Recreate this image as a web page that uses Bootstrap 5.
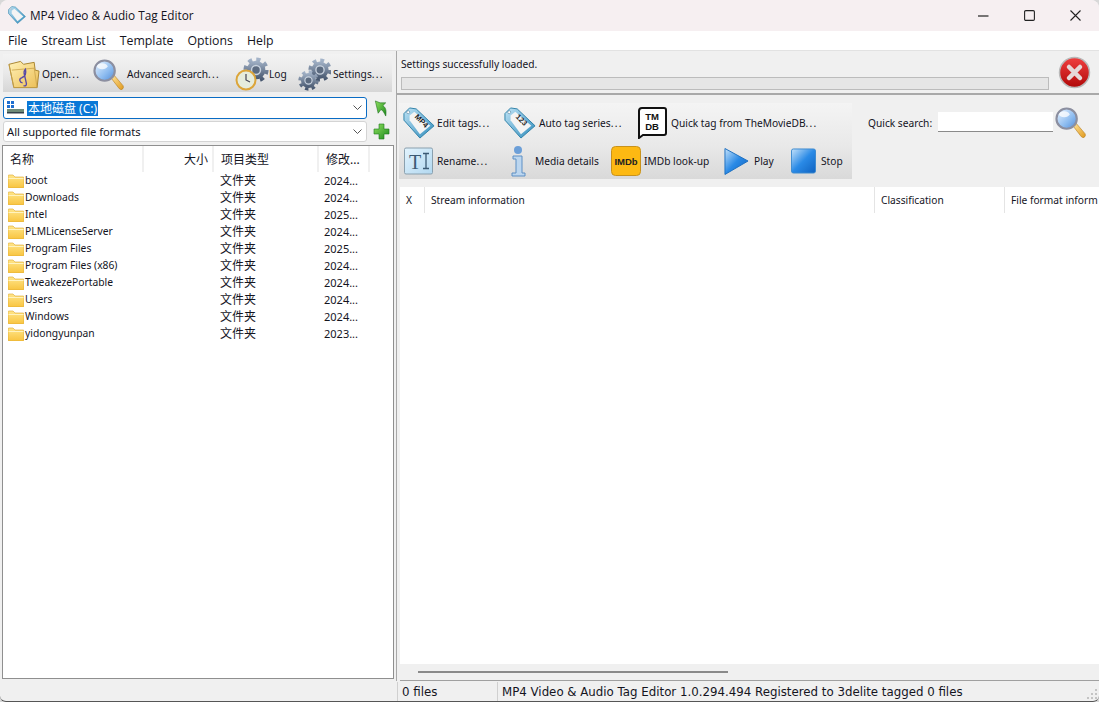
<!DOCTYPE html>
<html lang="en">
<head>
<meta charset="utf-8">
<title>MP4 Video &amp; Audio Tag Editor</title>
<link href="https://cdn.jsdelivr.net/npm/bootstrap@5.3.0/dist/css/bootstrap.min.css" rel="stylesheet">
<style>
html,body{height:100%;margin:0;overflow:hidden;background:#d8d8d8}
body{font-family:"Noto Sans","Noto Sans CJK SC",sans-serif;font-size:10.2px;color:#14141e}
.appwin{width:1099px;height:702px;background:#f0f0f0;border-radius:8px 8px 6px 6px;overflow:hidden;border-bottom:1px solid #555}
.titlebar{height:31px;background:#f6eff1;padding:0 0 1px 8px;font:11.8px "Open Sans",sans-serif;flex:none}
.titlebar svg.ticon{margin-right:4px}
.winbtns{margin-left:auto;margin-right:1px}
.winbtn{width:46px;height:30px;display:flex;align-items:center;justify-content:center}
.menubar{height:19px;background:#fff;padding-left:8px;gap:14px;font:12.3px "Open Sans",sans-serif;flex:none;line-height:19px}
.mainarea{flex:1 1 auto;min-height:0;border-top:1px solid #e2e2e2}
.leftpane{width:394px;flex:none;padding:3px 0 0 3px}
.rightpane{flex:1 1 auto;min-width:0;margin-left:2px;border-left:1px solid #a8a8a8}
.tools{height:38px;width:389px;background:linear-gradient(#f3f3f3,#e9e9e9 50%,#d6d6d6);padding-left:5px;padding-top:2px}
.toolitem{display:flex;align-items:center;white-space:nowrap;flex:none}
.toolitem>span{padding-top:2px}
.dotz{letter-spacing:1.3px}
.combo{height:22px;background:#fff;border:1px solid #d4d4d4;border-radius:3px;width:364px;position:relative;display:flex;align-items:center;padding-left:3px;font-size:11.2px}
.combo.on{border-color:#0a6cc4}
.combo .chev{position:absolute;right:4px;top:7px}
.combo.plain{height:21px;padding:1px 0 0 3px}
.sel{background:#0a78d7;color:#fff;font-size:12px;line-height:15px;padding:0 1px;margin-left:3px}
.comborow{gap:6px;height:22px}
.comboa{margin-top:5px}
.combob{margin-top:2px;height:21px}
.filebox{flex:1 1 auto;margin:3px 0 2px -1px;background:#fff;border:1px solid #8f8f8f;width:392px;min-height:0}
.ftable{table-layout:fixed;width:366px;margin:0;--bs-table-bg:transparent;font-size:10.3px}
.ftable td,.ftable th{padding:0;height:17px;line-height:17px;white-space:nowrap;overflow:hidden;vertical-align:middle;color:#14141e}
.ftable th{height:26px;font-weight:400;font-size:12px;border-right:2px solid #f0f0f0;padding-left:7px;padding-top:1px}
.ftable td.typec{font-size:12px;padding-left:7px}
.ftable td.datec{padding-left:6px;font-size:11px}
.fname{display:flex;align-items:center;padding-left:5px;gap:1px}
.msgarea{height:44px;flex:none;border-bottom:2px solid #a9a9a9;padding:0 8px 0 4px}
.msgtxt{line-height:14px;padding-top:6px}
.progressbox{height:13px;width:648px;background:#e6e6e6;border:1px solid #bcbcbc;margin-top:6px}
.stopx{margin-left:9px;margin-top:5px;flex:none}
.tagarea{height:92px;flex:none;padding:8px 0 0 2px;background:#f0f0f0}
.tagtools{width:453px;height:76px;background:linear-gradient(#f4f4f4,#e9e9e9 55%,#d9d9d9);padding:0 0 0 4px;flex:none}
.tagrow{height:38px;padding-top:2px}
.qsearch{margin-left:16px;height:38px}
.qinput{width:115px;height:20px;background:#fff;border:0;border-bottom:1px solid #8a8a8a;margin-left:6px;margin-right:2px;border-radius:0;padding:0}
.streamtable{flex:1 1 auto;background:#fff;min-height:0;margin-left:3px;overflow:hidden}
.shead{height:26px;flex:none;white-space:nowrap;overflow:hidden}
.shead>div{flex:none;height:26px;line-height:26px;padding-left:6px;border-right:1px solid #e4e4e4}
.sbar{height:17px;flex:none;background:#f0f0f0;margin-left:3px;padding-left:18px;border-bottom:1px solid #a0a0a0}
.sbar div{width:310px;height:2px;background:#8a8a8a;margin-top:7px}
.statusbar{height:20px;flex:none;font:11.8px "DejaVu Sans",sans-serif;line-height:20px;position:relative;padding-top:1px}
.stleft{width:398px;flex:none;border-right:1px solid #d0d0d0;height:19px}
.stfiles{width:100px;flex:none;padding-left:4px;border-right:1px solid #d0d0d0;height:19px}
.stmain{padding-left:4px;white-space:nowrap}
.grip{position:absolute;right:1px;bottom:1px}
.tagtext{font-family:"Liberation Sans",sans-serif;font-weight:700;font-size:8px;fill:#222}
</style>
</head>
<body>
<svg width="0" height="0" class="position-absolute">
<defs>
<linearGradient id="gGlass" x1="0" y1="0" x2="1" y2="1"><stop offset="0" stop-color="#eef6ff"/><stop offset=".6" stop-color="#8dbcf0"/><stop offset="1" stop-color="#4f8ad6"/></linearGradient>
<linearGradient id="gHandle" x1="0" y1="0" x2="1" y2="1"><stop offset="0" stop-color="#ffe39a"/><stop offset="1" stop-color="#e09a1e"/></linearGradient>
<linearGradient id="gGear" x1="0" y1="0" x2="0" y2="1"><stop offset="0" stop-color="#a3b3c8"/><stop offset="1" stop-color="#46566e"/></linearGradient>
<linearGradient id="gFold" x1="0" y1="0" x2="1" y2="1"><stop offset="0" stop-color="#fff2b8"/><stop offset="1" stop-color="#ecbe55"/></linearGradient>
<linearGradient id="gBlue" x1="0" y1="0" x2="1" y2="1"><stop offset="0" stop-color="#c5e2fa"/><stop offset=".5" stop-color="#2a8ae6"/><stop offset="1" stop-color="#0f62c0"/></linearGradient>
<linearGradient id="gTag" x1="0" y1="0" x2="1" y2="1"><stop offset="0" stop-color="#bfe3f5"/><stop offset="1" stop-color="#2f8cbc"/></linearGradient>
<linearGradient id="gRed" x1="0" y1="0" x2="0" y2="1"><stop offset="0" stop-color="#f04040"/><stop offset="1" stop-color="#b00808"/></linearGradient>
<linearGradient id="gGreen" x1="0" y1="0" x2="1" y2="1"><stop offset="0" stop-color="#8fe060"/><stop offset="1" stop-color="#1c8a1c"/></linearGradient>
<linearGradient id="gSmall" x1="0" y1="0" x2="0" y2="1"><stop offset="0" stop-color="#ffe68a"/><stop offset="1" stop-color="#f8c440"/></linearGradient>
<linearGradient id="gTI" x1="0" y1="0" x2="1" y2="1"><stop offset="0" stop-color="#e2f3fd"/><stop offset="1" stop-color="#b2d8f0"/></linearGradient>
<symbol id="iGlass" viewBox="0 0 32 32">
<path d="M19 20l3-3 9 10.500q1 2-.5 3.500t-3.500-.5z" fill="url(#gHandle)" stroke="#b57a18" stroke-width=".6"/>
<circle cx="12" cy="12" r="10.500" fill="url(#gGlass)" stroke="#8c8fa0" stroke-width="2.200"/>
<ellipse cx="9.500" cy="7.500" rx="5.500" ry="3" fill="#fff" opacity=".75"/>
</symbol>
<symbol id="iGear" viewBox="0 0 32 32">
<circle cx="16" cy="16" r="11.500" fill="url(#gGear)"/>
<circle cx="16" cy="16" r="13" fill="none" stroke="url(#gGear)" stroke-width="5" stroke-dasharray="5.100 5.100"/>
<circle cx="16" cy="16" r="5.500" fill="#5c6b80" stroke="#c8d2de" stroke-width="1.800"/>
</symbol>
<symbol id="iTag" viewBox="0 0 34 34">
<path d="M1 7 7 1 14 2 33 20 18 33 1 14z" fill="url(#gTag)" stroke="#2a7ea6" stroke-width="1"/>
<path d="M7 9 12 5 29 20 18 29 7 14z" fill="#f4f4f4"/>
<circle cx="5.500" cy="5.500" r="1.600" fill="#fff" stroke="#5c8aa6" stroke-width=".7"/>
</symbol>
</defs>
</svg>

<div class="appwin d-flex flex-column">
  <div class="titlebar d-flex align-items-center">
    <svg class="ticon" width="18" height="18" viewBox="0 0 34 34"><use href="#iTag"/></svg>
    <span>MP4 Video &amp; Audio Tag Editor</span>
    <div class="winbtns d-flex">
      <div class="winbtn"><svg width="11" height="11" viewBox="0 0 11 11"><path d="M0 6h10.500" stroke="#222" stroke-width="1.200"/></svg></div>
      <div class="winbtn"><svg width="11" height="11" viewBox="0 0 11 11"><rect x=".6" y=".6" width="9.800" height="9.800" rx="1.200" fill="none" stroke="#222" stroke-width="1.100"/></svg></div>
      <div class="winbtn"><svg width="11" height="11" viewBox="0 0 11 11"><path d="M.5.500l10 10M10.500.500l-10 10" stroke="#222" stroke-width="1.100"/></svg></div>
    </div>
  </div>
  <div class="menubar d-flex"><span>File</span><span>Stream List</span><span>Template</span><span>Options</span><span>Help</span></div>

  <div class="mainarea d-flex">
    <div class="leftpane d-flex flex-column">
      <div class="tools d-flex align-items-center">
        <div class="toolitem" style="width:85px;gap:2px">
          <svg width="32" height="32" viewBox="0 0 33 32">
            <path d="M1 6 L13 3 L16 6 L27 4 L28 12 L32 13 L30 30 L6 30z" fill="url(#gFold)" stroke="#a88430" stroke-width="1"/>
            <path d="M1 6 L6 30 L30 30 L27 10 L4 12" fill="none" stroke="#c9a24a" stroke-width=".8"/>
            <path d="M15 25c-3 0-4-4-1-5 4-2 5-4 4-9-1 1-2 3-1 6l2 9q0 3-3 2" fill="none" stroke="#5a4aa6" stroke-width="1.400"/>
          </svg><span>Open<span class="dotz">...</span></span>
        </div>
        <div class="toolitem" style="width:142px;gap:3px">
          <svg width="31" height="31"><use href="#iGlass"/></svg><span>Advanced search<span class="dotz">...</span></span>
        </div>
        <div class="toolitem" style="width:63px">
          <svg width="34" height="34" viewBox="0 0 34 34">
            <use href="#iGear" x="8" y="0" width="26" height="26"/>
            <circle cx="11" cy="23" r="9.500" fill="#e6ecdc" stroke="#dca53a" stroke-width="2"/>
            <path d="M11 17v6l4 2" stroke="#445" stroke-width="1.200" fill="none"/>
          </svg><span>Log</span>
        </div>
        <div class="toolitem" style="gap:2px">
          <svg width="33" height="33" viewBox="0 0 33 33">
            <use href="#iGear" x="10" y="0" width="24" height="24"/>
            <use href="#iGear" x="0" y="12" width="21" height="21"/>
          </svg><span>Settings<span class="dotz">...</span></span>
        </div>
      </div>
      <div class="d-flex comborow comboa">
        <div class="combo on">
          <svg width="17" height="14" viewBox="0 0 17 14"><path fill="#1f6fd0" d="M0 0h3v3H0zM4 0h3v3H4zM0 4h3v3H0zM4 4h3v3H4z"/><rect x="0" y="8" width="17" height="3" fill="#6e8a78"/><rect y="11" width="17" height="1.500" fill="#34424a"/></svg>
          <span class="sel">本地磁盘 (C:)</span>
          <svg class="chev" width="9" height="6" viewBox="0 0 9 6"><path d="M.5.500l4 4 4-4" fill="none" stroke="#555"/></svg>
        </div>
        <svg width="16" height="17" viewBox="0 0 16 18" class="align-self-center"><path d="M2 1l5 2 6 0-3 3c3 2 4 5 3 11-2-4-3-6-5-7L5 14z" fill="url(#gGreen)" stroke="#1d6e1d" stroke-width=".6"/></svg>
      </div>
      <div class="d-flex comborow combob align-items-center">
        <div class="combo plain">
          <span>All supported file formats</span>
          <svg class="chev" width="9" height="6" viewBox="0 0 9 6"><path d="M.5.500l4 4 4-4" fill="none" stroke="#555"/></svg>
        </div>
        <svg width="17" height="17" viewBox="0 0 17 17"><path d="M6 1h5v5h5v5h-5v5H6v-5H1V6h5z" fill="url(#gGreen)" stroke="#1d7a1d" stroke-width=".6"/></svg>
      </div>
      <div class="filebox">
        <table class="table table-borderless ftable">
          <colgroup><col style="width:140px"><col style="width:70px"><col style="width:105px"><col style="width:51px"></colgroup>
          <thead><tr><th>名称</th><th class="text-end pe-1">大小</th><th>项目类型</th><th>修改...</th></tr></thead>
          <tbody id="flist"></tbody>
        </table>
      </div>
    </div>

    <div class="rightpane d-flex flex-column">
      <div class="msgarea d-flex">
        <div>
          <div class="msgtxt">Settings successfully loaded.</div>
          <div class="progressbox"></div>
        </div>
        <svg class="stopx" width="33" height="33" viewBox="0 0 33 33">
          <circle cx="16.500" cy="16.500" r="15" fill="url(#gRed)" stroke="#b9b9b9" stroke-width="1.500"/>
          <path d="M11 11l11 11M22 11L11 22" stroke="#e6d8d8" stroke-width="4.500" stroke-linecap="round"/>
        </svg>
      </div>
      <div class="tagarea d-flex">
        <div class="tagtools">
          <div class="tagrow d-flex align-items-center">
            <div class="toolitem" style="width:101px;gap:2px">
              <svg width="32" height="32" viewBox="0 0 34 34"><use href="#iTag"/><text transform="translate(12 11) rotate(45)" class="tagtext">MP4</text></svg><span>Edit tags<span class="dotz">...</span></span>
            </div>
            <div class="toolitem" style="width:133px;gap:3px">
              <svg width="32" height="32" viewBox="0 0 34 34"><use href="#iTag"/><text transform="translate(12 11) rotate(45)" class="tagtext">123</text></svg><span>Auto tag series<span class="dotz">...</span></span>
            </div>
            <div class="toolitem" style="gap:4px">
              <svg width="30" height="32" viewBox="0 0 30 32"><path d="M5 1h22a2 2 0 0 1 2 2v23a2 2 0 0 1-2 2H6l-4 3V4a3 3 0 0 1 3-3z" fill="#fff" stroke="#111" stroke-width="2"/><text x="15" y="13" text-anchor="middle" font-family="Liberation Sans" font-weight="700" font-size="9.500" fill="#111">TM</text><text x="15" y="23" text-anchor="middle" font-family="Liberation Sans" font-weight="700" font-size="9.500" fill="#111">DB</text></svg><span>Quick tag from TheMovieDB<span class="dotz">...</span></span>
            </div>
          </div>
          <div class="tagrow d-flex align-items-center">
            <div class="toolitem" style="width:101px;gap:4px;padding-left:1px">
              <svg width="29" height="28" viewBox="0 0 29 27"><rect x=".5" y=".5" width="28" height="26" rx="1.500" fill="url(#gTI)" stroke="#8aa0ae"/><text x="5" y="21" font-family="Liberation Serif" font-size="20" fill="#3b5a74">T</text><path d="M19 6h6M19 21h6M22 6v15" stroke="#3b5a74" stroke-width="1.300" fill="none"/></svg><span>Rename<span class="dotz">...</span></span>
            </div>
            <div class="toolitem" style="width:107px;gap:8px;padding-left:6px">
              <svg width="17" height="31" viewBox="0 0 17 31"><circle cx="8" cy="4" r="4" fill="#6c9fd8"/><path d="M3 10h9v17h3v3H2v-3h4V13H3z" fill="#bcd6ef" stroke="#5d8fc4"/></svg><span>Media details</span>
            </div>
            <div class="toolitem" style="width:113px;gap:3px">
              <svg width="30" height="30" viewBox="0 0 30 30"><rect x=".5" y=".5" width="29" height="29" rx="4" fill="#fdb913" stroke="#c8921c"/><text x="15" y="19" text-anchor="middle" font-family="Liberation Sans" font-weight="700" font-size="9.500" fill="#222">IMDb</text></svg><span>IMDb look-up</span>
            </div>
            <div class="toolitem" style="width:67px;gap:5px">
              <svg width="25" height="29" viewBox="0 0 26 29"><path d="M1 1l24 13L1 28z" fill="url(#gBlue)" stroke="#1d6fc0"/></svg><span>Play</span>
            </div>
            <div class="toolitem" style="gap:5px">
              <svg width="25" height="26" viewBox="0 0 26 26"><rect x=".5" y=".5" width="25" height="25" rx="2" fill="url(#gBlue)" stroke="#3c8ad0"/></svg><span>Stop</span>
            </div>
          </div>
        </div>
        <div class="qsearch d-flex align-items-center">
          <span class="pt-1">Quick search:</span>
          <input class="qinput" type="text" aria-label="Quick search">
          <svg width="31" height="31"><use href="#iGlass"/></svg>
        </div>
      </div>
      <div class="streamtable d-flex flex-column">
        <div class="shead d-flex">
          <div style="width:25px">X</div>
          <div style="width:450px">Stream information</div>
          <div style="width:130px">Classification</div>
          <div class="border-0" style="width:90px">File format inform</div>
        </div>
      </div>
      <div class="sbar"><div></div></div>
    </div>
  </div>

  <div class="statusbar d-flex">
    <div class="stleft"></div>
    <div class="stfiles">0 files</div>
    <div class="stmain">MP4 Video &amp; Audio Tag Editor 1.0.294.494 Registered to 3delite tagged 0 files</div>
    <svg class="grip" width="12" height="12" viewBox="0 0 12 12"><path d="M9 1h2v2H9zM5 5h2v2H5zM9 5h2v2H9zM1 9h2v2H1zM5 9h2v2H5zM9 9h2v2H9z" fill="#c4c4c4"/></svg>
  </div>
</div>

<script>
var rows=[["boot","2024"],["Downloads","2024"],["Intel","2025"],["PLMLicenseServer","2024"],["Program Files","2025"],["Program Files (x86)","2024"],["TweakezePortable","2024"],["Users","2024"],["Windows","2024"],["yidongyunpan","2023"]];
var fold='<svg width="16" height="14" viewBox="0 0 16 14"><path d="M0 2a1 1 0 0 1 1-1h4l2 2h8a1 1 0 0 1 1 1v9a1 1 0 0 1-1 1H1a1 1 0 0 1-1-1z" fill="url(#gSmall)" stroke="#dca52e" stroke-width=".6"/><path d="M.5 4.500h15" stroke="#fff3bf"/></svg>';
document.getElementById('flist').innerHTML=rows.map(function(r){return '<tr><td><div class="fname">'+fold+'<span>'+r[0]+'</span></div></td><td></td><td class="typec">文件夹</td><td class="datec">'+r[1]+'...</td></tr>';}).join('');
</script>
<script src="https://cdn.jsdelivr.net/npm/bootstrap@5.3.0/dist/js/bootstrap.bundle.min.js"></script>
</body>
</html>
